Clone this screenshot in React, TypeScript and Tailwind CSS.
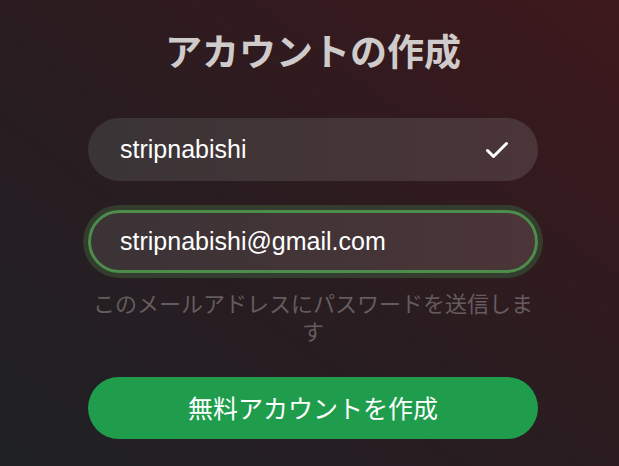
export default function App() {
  return (
    <div className="min-h-[466px] w-full bg-[linear-gradient(to_top_right,#1f2125_0%,#2a1c20_50%,#3d181c_100%)] pl-[7px] font-['Liberation_Sans','Noto_Sans_CJK_JP',sans-serif]">
      <div className="mx-auto flex w-[450px] flex-col items-center pt-[28px]">
        <h1 className="h-[44px] text-[37px] font-bold leading-[44px] text-[#cfcbcb] font-['Noto_Sans_CJK_JP',sans-serif]">
          アカウントの作成
        </h1>

        <div className="mt-[46px] flex h-[63px] w-full items-center rounded-full bg-[linear-gradient(to_right,#3a3436,#4b3538)] pl-[32px] pr-[29px]">
          <input
            readOnly
            defaultValue="stripnabishi"
            className="min-w-0 flex-1 bg-transparent text-[25px] text-white outline-none"
          />
          <svg width="24" height="18" viewBox="0 0 24 18" fill="none" className="shrink-0">
            <path
              d="M2.5 9.5 8.5 15.5 21.5 2.5"
              stroke="white"
              strokeWidth="3"
              strokeLinecap="round"
              strokeLinejoin="round"
            />
          </svg>
        </div>

        <div className="mt-[29px] flex h-[63px] w-full items-center rounded-full border-[3px] border-[#4c8d4c] bg-[linear-gradient(to_right,#3b3336,#4b3538)] pl-[29px] pr-[29px] ring-[5px] ring-[#343c2e]">
          <input
            readOnly
            defaultValue="stripnabishi@gmail.com"
            className="min-w-0 flex-1 bg-transparent text-[25px] text-white outline-none"
          />
        </div>

        <p className="mt-[15px] w-full text-center text-[22px] leading-[28px] text-[#655c5e] font-['Noto_Sans_CJK_JP',sans-serif]">
          このメールアドレスにパスワードを送信します
        </p>

        <button className="mt-[33px] flex h-[62px] w-full items-center justify-center rounded-full bg-[#1f9d4c] text-[25px] text-white font-['Noto_Sans_CJK_JP',sans-serif]">
          無料アカウントを作成
        </button>
      </div>
    </div>
  );
}
